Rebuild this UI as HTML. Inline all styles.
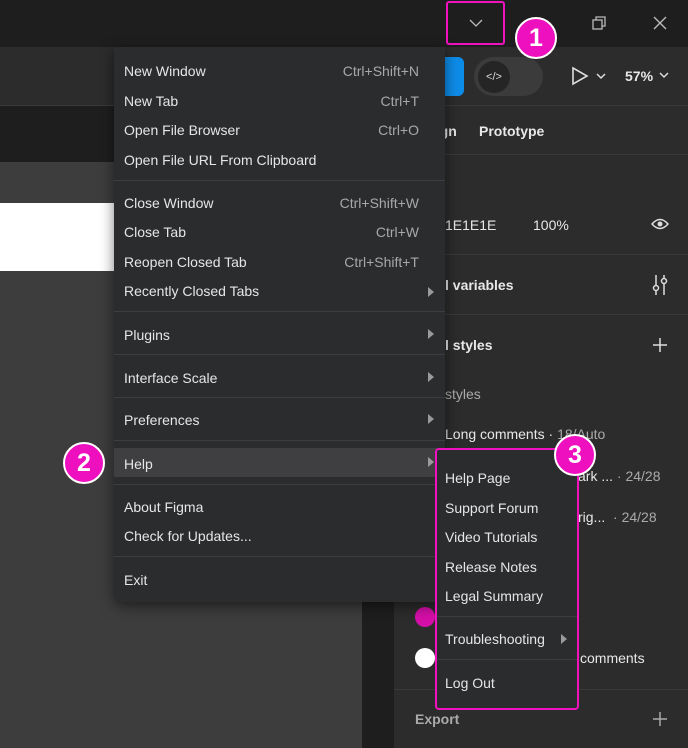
<!DOCTYPE html>
<html><head><style>
*{margin:0;padding:0;box-sizing:border-box}
body{width:688px;height:748px;overflow:hidden;background:#3d3d3d;font-family:"Liberation Sans",sans-serif;position:relative;color:#e6e6e6}
.a{position:absolute}
.t{position:absolute;font-size:14px;white-space:nowrap}
.sc{color:#a8a8a8;right:26px}
.sep{position:absolute;left:0;right:0;height:1px;background:#3c3d40}
.arr{position:absolute;width:0;height:0;border-left:6px solid #9a9a9a;border-top:5px solid transparent;border-bottom:5px solid transparent}
.badge{position:absolute;width:42px;height:42px;border-radius:50%;background:#ee0fbe;border:2px solid #fff;color:#fff;font-size:25px;font-weight:bold;text-align:center;line-height:38px;font-family:"Liberation Sans",sans-serif}
.pt{position:absolute;font-size:14px;color:#e8e8e8;white-space:nowrap}
.b{font-weight:bold}
</style></head><body>
<div class="a" style="left:0;top:0;width:688px;height:47px;background:#1e1e1e"></div>
<div class="a" style="left:0;top:47px;width:688px;height:59px;background:#2c2c2c;border-bottom:1px solid #3a3a3a"></div>
<div class="a" style="left:0;top:106px;width:688px;height:56px;background:#1e1e1e"></div>
<div class="a" style="left:0;top:203px;width:114px;height:68px;background:#fff"></div>
<div class="a" style="left:362px;top:162px;width:32px;height:586px;background:#1e1e1e"></div>
<div class="a" style="left:394px;top:106px;width:294px;height:642px;background:#2c2c2c"></div>
<div class="a" style="left:394px;top:154px;width:294px;height:1px;background:#3a3a3a"></div>
<div class="a" style="left:394px;top:254px;width:294px;height:1px;background:#3a3a3a"></div>
<div class="a" style="left:394px;top:314px;width:294px;height:1px;background:#3a3a3a"></div>
<div class="a" style="left:394px;top:689px;width:294px;height:1px;background:#3a3a3a"></div>
<div class="a" style="left:430px;top:57px;width:34px;height:39px;background:#0d8ce9;border-radius:6px"></div>
<div class="a" style="left:474px;top:57px;width:69px;height:39px;background:#3b3b3b;border-radius:20px"></div>
<div class="a" style="left:478px;top:61px;width:32px;height:32px;background:#252525;border-radius:50%;color:#ddd;font-size:11px;text-align:center;line-height:32px">&lt;/&gt;</div>
<svg class="a" style="left:570px;top:66px" width="40" height="20"><path d="M3 2 L17 10 L3 18 Z" fill="none" stroke="#ddd" stroke-width="1.6"/><path d="M27 8 l4 4 l4 -4" fill="none" stroke="#ddd" stroke-width="1.5"/></svg>
<div class="pt b" style="left:625px;top:68px">57%</div>
<svg class="a" style="left:658px;top:70px" width="12" height="10"><path d="M2 3 l4 4 l4 -4" fill="none" stroke="#ddd" stroke-width="1.5"/></svg>
<div class="pt b" style="left:428px;top:123px">sign</div>
<div class="pt b" style="left:479px;top:123px">Prototype</div>
<div class="pt" style="left:445px;top:217px">1E1E1E</div>
<div class="pt" style="left:533px;top:217px">100%</div>
<svg class="a" style="left:651px;top:217px" width="18" height="14"><path d="M1 7 Q9 -2 17 7 Q9 16 1 7Z" fill="none" stroke="#ddd" stroke-width="1.5"/><circle cx="9" cy="7" r="2.5" fill="#ddd"/></svg>
<div class="pt b" style="left:445px;top:277px">l variables</div>
<svg class="a" style="left:651px;top:274px" width="18" height="22"><path d="M5 1v20M13 1v20" stroke="#ddd" stroke-width="1.5"/><circle cx="5" cy="14" r="2.5" fill="#2c2c2c" stroke="#ddd" stroke-width="1.5"/><circle cx="13" cy="7" r="2.5" fill="#2c2c2c" stroke="#ddd" stroke-width="1.5"/></svg>
<div class="pt b" style="left:445px;top:337px">l styles</div>
<svg class="a" style="left:652px;top:337px" width="16" height="16"><path d="M8 1v14M1 8h14" stroke="#ddd" stroke-width="1.5"/></svg>
<div class="pt" style="left:445px;top:386px;color:#aaa">styles</div>
<div class="pt" style="left:445px;top:426px">Long comments · <span style="color:#aaa">18/Auto</span></div>
<div class="pt" style="left:578px;top:468px">ark ... <span style="color:#aaa">· 24/28</span></div>
<div class="pt" style="left:578px;top:509px">rig... &nbsp;<span style="color:#aaa">· 24/28</span></div>
<div class="a" style="left:415px;top:607px;width:20px;height:20px;border-radius:50%;background:#d40fa8"></div>
<div class="a" style="left:415px;top:648px;width:20px;height:20px;border-radius:50%;background:#fff"></div>
<div class="pt" style="left:580px;top:650px">comments</div>
<div class="pt b" style="left:415px;top:711px;color:#aaa">Export</div>
<svg class="a" style="left:652px;top:711px" width="16" height="16"><path d="M8 1v14M1 8h14" stroke="#aaa" stroke-width="1.5"/></svg>
<div class="a" style="left:446px;top:1px;width:59px;height:44px;border:2px solid #f012be;border-radius:3px"></div>
<svg class="a" style="left:469px;top:18px" width="14" height="10"><path d="M1 2 l6 6 l6 -6" fill="none" stroke="#bbb" stroke-width="1.3"/></svg>
<svg class="a" style="left:592px;top:16px" width="14" height="14"><rect x="1" y="4" width="9" height="9" fill="none" stroke="#bbb" stroke-width="1.3"/><path d="M4 4V1h9v9h-3" fill="none" stroke="#bbb" stroke-width="1.3"/></svg>
<svg class="a" style="left:653px;top:16px" width="14" height="14"><path d="M1 1L13 13M13 1L1 13" stroke="#bbb" stroke-width="1.4"/></svg>
<div class="a" style="left:114px;top:47px;width:331px;height:555px;background:#2b2c2e;border-radius:0 0 8px 8px;box-shadow:0 4px 14px rgba(0,0,0,.5)">
<div class="t" style="left:10px;top:16px">New Window</div><div class="t sc" style="top:16px;right:26px">Ctrl+Shift+N</div>
<div class="t" style="left:10px;top:46px">New Tab</div><div class="t sc" style="top:46px">Ctrl+T</div>
<div class="t" style="left:10px;top:75px">Open File Browser</div><div class="t sc" style="top:75px">Ctrl+O</div>
<div class="t" style="left:10px;top:105px">Open File URL From Clipboard</div>
<div class="sep" style="top:133px"></div>
<div class="t" style="left:10px;top:148px">Close Window</div><div class="t sc" style="top:148px">Ctrl+Shift+W</div>
<div class="t" style="left:10px;top:177px">Close Tab</div><div class="t sc" style="top:177px">Ctrl+W</div>
<div class="t" style="left:10px;top:207px">Reopen Closed Tab</div><div class="t sc" style="top:207px">Ctrl+Shift+T</div>
<div class="t" style="left:10px;top:236px">Recently Closed Tabs</div><div class="arr" style="left:314px;top:240px"></div>
<div class="sep" style="top:264px"></div>
<div class="t" style="left:10px;top:280px">Plugins</div><div class="arr" style="left:314px;top:282px"></div>
<div class="sep" style="top:307px"></div>
<div class="t" style="left:10px;top:323px">Interface Scale</div><div class="arr" style="left:314px;top:325px"></div>
<div class="sep" style="top:350px"></div>
<div class="t" style="left:10px;top:365px">Preferences</div><div class="arr" style="left:314px;top:367px"></div>
<div class="sep" style="top:393px"></div>
<div class="a" style="left:0;top:401px;width:331px;height:29px;background:#3f3f41"></div>
<div class="t" style="left:10px;top:409px">Help</div><div class="arr" style="left:314px;top:410px"></div>
<div class="sep" style="top:437px"></div>
<div class="t" style="left:10px;top:452px">About Figma</div>
<div class="t" style="left:10px;top:481px">Check for Updates...</div>
<div class="sep" style="top:509px"></div>
<div class="t" style="left:10px;top:525px">Exit</div>
</div>
<div class="a" style="left:435px;top:448px;width:144px;height:262px;background:#2b2c2e;border:2px solid #f012be;border-radius:4px">
<div class="t" style="left:8px;top:20px">Help Page</div>
<div class="t" style="left:8px;top:50px">Support Forum</div>
<div class="t" style="left:8px;top:79px">Video Tutorials</div>
<div class="t" style="left:8px;top:109px">Release Notes</div>
<div class="t" style="left:8px;top:138px">Legal Summary</div>
<div class="sep" style="top:166px"></div>
<div class="t" style="left:8px;top:181px">Troubleshooting</div><div class="arr" style="left:124px;top:184px"></div>
<div class="sep" style="top:209px"></div>
<div class="t" style="left:8px;top:225px">Log Out</div>
</div>
<div class="badge" style="left:515px;top:17px">1</div>
<div class="badge" style="left:63px;top:442px">2</div>
<div class="badge" style="left:554px;top:434px">3</div>
</body></html>
